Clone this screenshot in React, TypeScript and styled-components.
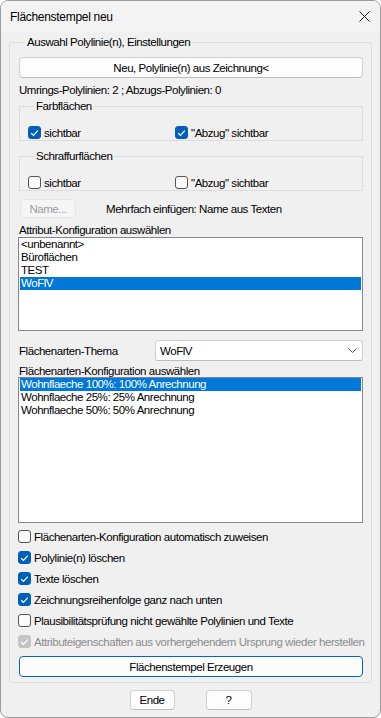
import styled, {createGlobalStyle} from "styled-components";

const GlobalStyle = createGlobalStyle`
  body {
    margin: 0;
    background: #ffffff;
    font-family: "Liberation Sans", Arial, sans-serif;
    font-size: 11.5px;
    letter-spacing: -0.45px;
    color: #000;
  }
  * {
    box-sizing: border-box;
  }
`;

const Window = styled.div`
  width: 381px;
  height: 718px;
  border: 1px solid #9c9c9c;
  border-radius: 8px;
  background: #f0f0f0;
  overflow: hidden;
  display: flex;
  flex-direction: column;
`;

const TitleBar = styled.div`
  height: 31px;
  flex: none;
  display: flex;
  align-items: center;
  justify-content: space-between;
  padding: 0 10px 0 9px;
  background: #f3f3f3;
  font-size: 12px;
  letter-spacing: -0.3px;
`;

const Body = styled.div`
  flex: 1;
  display: flex;
  flex-direction: column;
  padding: 3px 8px 0 8px;
`;

const Group = styled.fieldset<{ $inner?: boolean }>`
  margin: 0;
  min-width: 0;
  border: 1px solid #dcdcdc;
  border-radius: ${p => p.$inner ? "0" : "3px"};
  padding: ${p => p.$inner ? "9px 8px 4px 8px" : "8px 8px 5px 9px"};
  display: flex;
  flex-direction: column;

  > legend {
    padding: 0 2px;
    margin-left: 6px;
    line-height: 14px;
  }
`;

const Button = styled.button<{ $default?: boolean; $width?: number; $height?: number }>`
  font: inherit;
  letter-spacing: inherit;
  color: #000;
  height: ${p => p.$height ?? 21}px;
  width: ${p => p.$width ? `${p.$width}px` : "100%"};
  padding: 0 4px;
  background: #fdfdfd;
  border: 1px solid ${p => p.$default ? "#0067c0" : "#d0d0d0"};
  border-bottom-color: ${p => p.$default ? "#0067c0" : "#bcbcbc"};
  box-shadow: ${p => p.$default ? "inset 0 0 0 1px #ffffff" : "none"};
  border-radius: 4px;
  line-height: 16px;

  &:disabled {
    color: #9d9d9d;
    background: #f5f5f5;
    border-color: #e5e5e5;
  }
`;

const InfoLine = styled.div`
  margin: 5px 0 2px;
  line-height: 14px;
`;

const CheckGrid = styled.div`
  display: grid;
  grid-template-columns: 147px 1fr;
  height: 14px;
  align-items: center;
`;

const CheckRow = styled.label<{ $disabled?: boolean }>`
  display: flex;
  align-items: center;
  gap: 3px;
  height: 21px;
  color: ${p => p.$disabled ? "#8c8c8c" : "#000"};
  white-space: nowrap;
`;

const Box = styled.span<{ $checked?: boolean; $disabled?: boolean }>`
  width: 13px;
  height: 13px;
  flex: none;
  border-radius: 3px;
  display: flex;
  align-items: center;
  justify-content: center;
  background: ${p => p.$disabled ? "#c4c4c4" : p.$checked ? "#005fb8" : "#fbfbfb"};
  border: 1px solid ${p => p.$disabled ? "#c4c4c4" : p.$checked ? "#005fb8" : "#555555"};
`;

const Spacer = styled.div<{ $h: number }>`
  height: ${p => p.$h}px;
  flex: none;
`;

const NameRow = styled.div`
  display: flex;
  align-items: center;
  margin: 8px 0 6px 1px;

  > span {
    margin-left: 30px;
  }
`;

const FieldLabel = styled.div<{ $lh?: number }>`
  line-height: ${p => p.$lh ?? 13}px;
  white-space: nowrap;
`;

const ListBox = styled.div<{ $height: number }>`
  height: ${p => p.$height}px;
  margin-left: -1px;
  background: #fff;
  border: 1px solid #828790;
  padding: 0 1px;
  display: flex;
  flex-direction: column;
`;

const ListItem = styled.div<{ $selected?: boolean }>`
  height: 13px;
  line-height: 13px;
  padding-left: 1px;
  white-space: nowrap;
  background: ${p => p.$selected ? "#0078d7" : "transparent"};
  color: ${p => p.$selected ? "#fff" : "#000"};
`;

const ThemeRow = styled.div`
  display: grid;
  grid-template-columns: 136px 1fr;
  align-items: center;
  margin: 9px 0 4px;
`;

const Combo = styled.div`
  height: 21px;
  background: #fff;
  border: 1px solid #d0d0d0;
  border-bottom-color: #bcbcbc;
  border-radius: 3px;
  display: flex;
  align-items: center;
  justify-content: space-between;
  padding: 0 5px 0 4px;
`;

const ChecksBlock = styled.div`
  display: flex;
  flex-direction: column;
  margin: 3px 0 4px -1px;
`;

const Footer = styled.div`
  display: flex;
  justify-content: center;
  gap: 31px;
  padding-top: 7px;
`;

const Check = () => (
  <svg width="9" height="8" viewBox="0 0 9 8">
    <path d="M1.2 4.2 L3.4 6.3 L7.8 1.6" fill="none" stroke="#fff" strokeWidth="1.2"/>
  </svg>
);

const CheckBox = ({checked, disabled}: { checked?: boolean; disabled?: boolean }) => (
  <Box $checked={checked} $disabled={disabled}>{(checked || disabled) && <Check/>}</Box>
);

const App = () => {
  const attrs = ["<unbenannt>", "Büroflächen", "TEST", "WoFlV"];
  const arten = ["Wohnflaeche 100%: 100% Anrechnung", "Wohnflaeche 25%: 25% Anrechnung", "Wohnflaeche 50%: 50% Anrechnung"];
  const options = [
    {text: "Flächenarten-Konfiguration automatisch zuweisen", checked: false},
    {text: "Polylinie(n) löschen", checked: true},
    {text: "Texte löschen", checked: true},
    {text: "Zeichnungsreihenfolge ganz nach unten", checked: true},
    {text: "Plausibilitätsprüfung nicht gewählte Polylinien und Texte", checked: false},
  ];

  return (
    <Window>
      <GlobalStyle/>
      <TitleBar>
        <span>Flächenstempel neu</span>
        <svg width="11" height="11" viewBox="0 0 11 11">
          <path d="M0.5 0.5 L10.5 10.5 M10.5 0.5 L0.5 10.5" stroke="#1a1a1a" strokeWidth="1"/>
        </svg>
      </TitleBar>
      <Body>
        <Group>
          <legend>Auswahl Polylinie(n), Einstellungen</legend>
          <Button>Neu, Polylinie(n) aus Zeichnung&lt;</Button>
          <InfoLine>Umrings-Polylinien: 2 ; Abzugs-Polylinien: 0</InfoLine>
          <Group $inner>
            <legend>Farbflächen</legend>
            <CheckGrid>
              <CheckRow><CheckBox checked/>sichtbar</CheckRow>
              <CheckRow><CheckBox checked/>"Abzug" sichtbar</CheckRow>
            </CheckGrid>
          </Group>
          <Spacer $h={8}/>
          <Group $inner>
            <legend>Schraffurflächen</legend>
            <CheckGrid>
              <CheckRow><CheckBox/>sichtbar</CheckRow>
              <CheckRow><CheckBox/>"Abzug" sichtbar</CheckRow>
            </CheckGrid>
          </Group>
          <NameRow>
            <Button $width={56} $height={19} disabled>Name...</Button>
            <span>Mehrfach einfügen: Name aus Texten</span>
          </NameRow>
          <FieldLabel>Attribut-Konfiguration auswählen</FieldLabel>
          <ListBox $height={94}>
            {attrs.map(a => <ListItem key={a} $selected={a === "WoFlV"}>{a}</ListItem>)}
          </ListBox>
          <ThemeRow>
            <FieldLabel $lh={14}>Flächenarten-Thema</FieldLabel>
            <Combo>
              <span>WoFlV</span>
              <svg width="9" height="5" viewBox="0 0 9 5">
                <path d="M0.5 0.5 L4.5 4.5 L8.5 0.5" fill="none" stroke="#555" strokeWidth="1"/>
              </svg>
            </Combo>
          </ThemeRow>
          <FieldLabel $lh={12}>Flächenarten-Konfiguration auswählen</FieldLabel>
          <ListBox $height={146}>
            {arten.map((a, i) => <ListItem key={a} $selected={i === 0}>{a}</ListItem>)}
          </ListBox>
          <ChecksBlock>
            {options.map(o => (
              <CheckRow key={o.text}><CheckBox checked={o.checked}/>{o.text}</CheckRow>
            ))}
            <CheckRow $disabled><CheckBox disabled/>Attributeigenschaften aus vorhergehendem Ursprung wieder herstellen</CheckRow>
          </ChecksBlock>
          <Button $default>Flächenstempel Erzeugen</Button>
        </Group>
        <Footer>
          <Button $width={45} $height={20}>Ende</Button>
          <Button $width={46} $height={20}>?</Button>
        </Footer>
      </Body>
    </Window>
  );
};

export default App;
